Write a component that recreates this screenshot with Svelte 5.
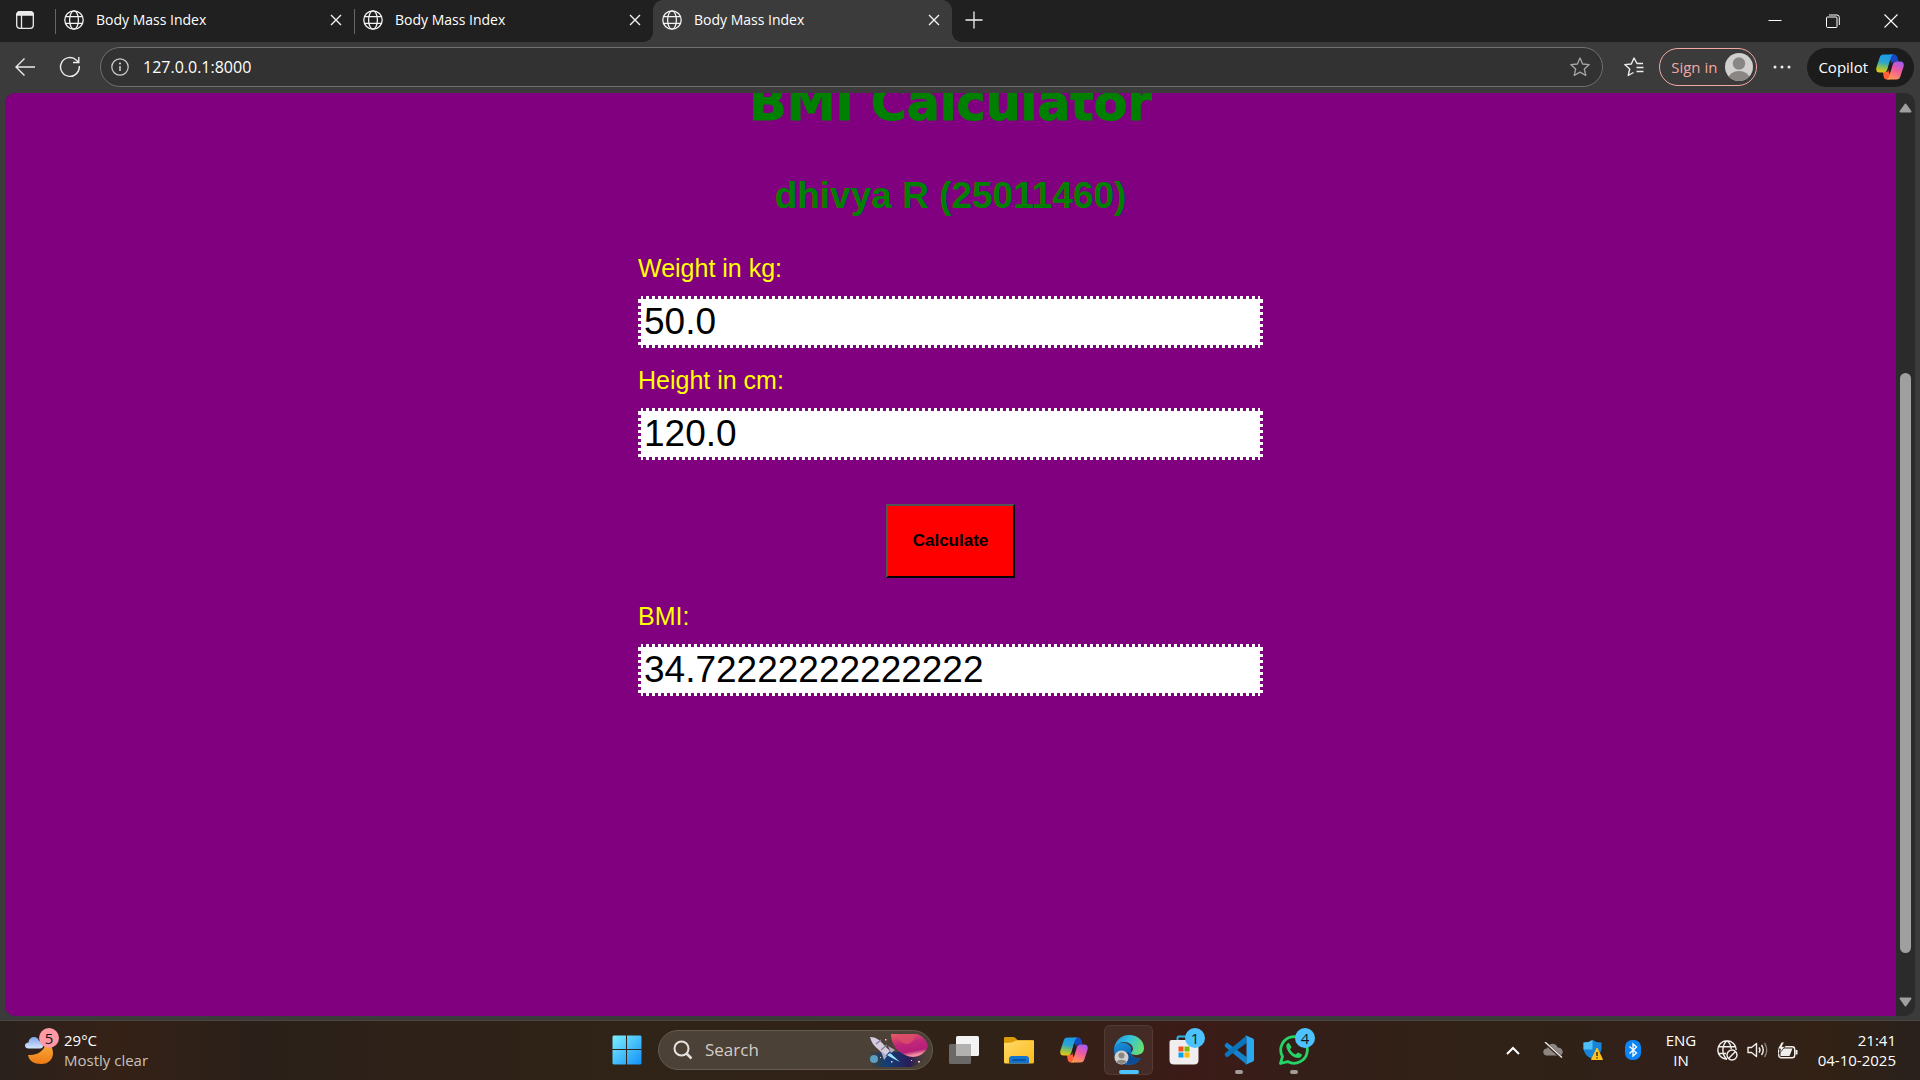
<script>
  const tabs = [
    { id: 1, title: 'Body Mass Index', active: false },
    { id: 2, title: 'Body Mass Index', active: false },
    { id: 3, title: 'Body Mass Index', active: true }
  ];

  let weight = $state('50.0');
  let height = $state('120.0');
  let bmi = $state('34.72222222222222');

  function calculate(event) {
    event.preventDefault();
    const metres = Number(height) / 100;
    bmi = String(Number(weight) / (metres * metres));
  }
</script>

{#snippet globe()}
  <svg width="20" height="20" viewBox="0 0 20 20" fill="none" stroke="#f2f2f2" stroke-width="1.3" aria-hidden="true">
    <circle cx="10" cy="10" r="9.2" />
    <ellipse cx="10" cy="10" rx="4.4" ry="9.2" />
    <path d="M1.6 6.6H18.4M1.6 13.4H18.4" />
  </svg>
{/snippet}

{#snippet copilot(uid)}
  <svg width="28" height="26" viewBox="0 0 28 26" aria-hidden="true">
    <defs>
      <linearGradient id="{uid}-a" x1="0.4" y1="0" x2="0.2" y2="1">
        <stop offset="0" stop-color="#1b9be8" />
        <stop offset="0.4" stop-color="#2aa5cf" />
        <stop offset="0.7" stop-color="#8cc152" />
        <stop offset="1" stop-color="#f5c60c" />
      </linearGradient>
      <linearGradient id="{uid}-b" x1="0.7" y1="0" x2="0.3" y2="1">
        <stop offset="0" stop-color="#a45af2" />
        <stop offset="0.45" stop-color="#ee5a9c" />
        <stop offset="1" stop-color="#ff9a52" />
      </linearGradient>
    </defs>
    <path d="M14 0.500H18C20 0.500 21 2 21.600 4L22.600 7.500H19C16.500 7.500 15.600 9 15 11L13.500 6Z" fill="#1748c8" />
    <path d="M7 18H10C12 18 12.500 16 13 14L15 20L14 25.500H11C8.500 25.500 8 24 7.500 22Z" fill="#ff6038" />
    <path d="M7.500 0.500H17.500C15.700 1 15 3 14.500 4.800L11.300 15.500C10.700 17.600 9.500 18.500 7.500 18.500H3.500C0.500 18.500 -0.300 16 0.500 13.200L3.600 3.800C4.300 1.600 5.500 0.500 7.500 0.500Z" fill="url(#{uid}-a)" />
    <path d="M20.500 25.500H10.500C12.300 25 13 23 13.500 21.200L16.700 10.500C17.300 8.400 18.500 7.500 20.500 7.500H24.500C27.500 7.500 28.300 10 27.500 12.800L24.400 22.200C23.700 24.400 22.500 25.500 20.500 25.500Z" fill="url(#{uid}-b)" />
    <path d="M14.600 5.500L12 14.500L13.400 20.500L16.200 11.500Z" fill="#241c1c" />
  </svg>
{/snippet}

<div class="window">
  <header class="tabstrip">
    <button class="workspaces" aria-label="Tab actions">
      <svg width="20" height="20" viewBox="0 0 20 20" fill="none" stroke="#ececec" stroke-width="1.300" aria-hidden="true">
        <rect x="1.700" y="1.700" width="16.600" height="16.600" rx="3" />
        <path d="M2 5V4.500Q2 2 4.500 2H15.500Q18 2 18 4.500V5Z" fill="#ececec" />
        <path d="M6.500 5V18" />
      </svg>
    </button>
    <nav class="tabs" aria-label="Open tabs">
      {#each tabs as tab (tab.id)}
        <div class="tab" class:active={tab.active}>
          <button class="tab-title">
            {@render globe()}
            <span>{tab.title}</span>
          </button>
          <button class="tab-close" aria-label="Close tab">
            <svg width="12" height="12" viewBox="0 0 12 12" stroke="#f2f2f2" stroke-width="1.400" aria-hidden="true">
              <path d="M1 1L11 11M11 1L1 11" />
            </svg>
          </button>
        </div>
      {/each}
    </nav>
    <button class="new-tab" aria-label="New tab">
      <svg width="18" height="18" viewBox="0 0 18 18" stroke="#f2f2f2" stroke-width="1.300" aria-hidden="true">
        <path d="M9 0.500V17.500M0.500 9H17.500" />
      </svg>
    </button>
    <div class="window-controls">
      <button aria-label="Minimise">
        <svg width="14" height="14" viewBox="0 0 14 14" stroke="#fff" aria-hidden="true"><path d="M0.500 6.500H13.500" /></svg>
      </button>
      <button aria-label="Restore">
        <svg width="14" height="14" viewBox="0 0 14 14" fill="none" stroke="#fff" aria-hidden="true">
          <rect x="0.500" y="3" width="10.500" height="10.500" rx="1" />
          <path d="M3 1H11Q13.300 1 13.300 3.300V11" />
        </svg>
      </button>
      <button aria-label="Close">
        <svg width="14" height="14" viewBox="0 0 14 14" stroke="#fff" stroke-width="1.100" aria-hidden="true"><path d="M0.500 0.500L13.500 13.500M13.500 0.500L0.500 13.500" /></svg>
      </button>
    </div>
  </header>

  <div class="toolbar">
    <button class="tool" aria-label="Back">
      <svg width="22" height="20" viewBox="0 0 22 20" fill="none" stroke="#ececec" stroke-width="1.400" aria-hidden="true"><path d="M10.500 1.500L2 10L10.500 18.500M2 10H21" /></svg>
    </button>
    <button class="tool" aria-label="Refresh">
      <svg width="22" height="22" viewBox="0 0 22 22" fill="none" stroke="#ececec" stroke-width="1.400" aria-hidden="true">
        <path d="M20.300 10A9.400 9.400 0 1 1 17.500 4.200L19.800 6.200M19.800 1V6.500H14" />
      </svg>
    </button>
    <div class="address">
      <svg width="18" height="18" viewBox="0 0 18 18" fill="none" stroke="#d0d0d0" stroke-width="1.200" aria-hidden="true">
        <circle cx="9" cy="9" r="8.200" />
        <path d="M9 8V13" stroke-width="1.500" />
        <circle cx="9" cy="5.500" r="0.500" fill="#d0d0d0" />
      </svg>
      <input type="text" aria-label="Address" value="127.0.0.1:8000" />
      <button aria-label="Add to favourites">
        <svg width="20" height="20" viewBox="0 0 20 20" fill="none" stroke="#a6a6a6" stroke-width="1.300" stroke-linejoin="round" aria-hidden="true">
          <path d="M10 1L12.600 7L19.200 7.600L14.300 12L15.800 18.500L10 15.100L4.200 18.500L5.700 12L0.800 7.600L7.400 7Z" />
        </svg>
      </button>
    </div>
    <button class="tool favourites" aria-label="Favourites">
      <svg width="20" height="20" viewBox="0 0 20 20" fill="none" stroke="#ececec" stroke-width="1.400" stroke-linejoin="round" aria-hidden="true">
        <path d="M19 6.500H13L10 1L7.300 7L0.800 7.600L5.700 12L4.200 18.500L9.500 15.500M12.500 10.500H19.500M12.500 14.500H19.500" />
      </svg>
    </button>
    <button class="sign-in">
      <span>Sign in</span>
      <svg width="28" height="28" viewBox="0 0 28 28" aria-hidden="true">
        <defs><clipPath id="avatar"><circle cx="14" cy="14" r="14" /></clipPath></defs>
        <g clip-path="url(#avatar)">
          <path d="M0 0H28V28H0Z" fill="#d2d0ce" />
          <circle cx="14" cy="10.500" r="6.200" fill="#8a8683" />
          <ellipse cx="14" cy="25.500" rx="10.500" ry="7.500" fill="#8a8683" />
        </g>
      </svg>
    </button>
    <button class="more" aria-label="Settings and more">
      <svg width="18" height="4" viewBox="0 0 18 4" fill="#ececec" aria-hidden="true"><circle cx="2" cy="2" r="1.500" /><circle cx="9" cy="2" r="1.500" /><circle cx="16" cy="2" r="1.500" /></svg>
    </button>
    <button class="copilot">
      <span>Copilot</span>
      {@render copilot('side')}
    </button>
  </div>

  <div class="viewport">
    <main class="page">
      <form class="bmi" onsubmit={calculate}>
        <h1>BMI Calculator</h1>
        <h2>dhivya R (25011460)</h2>
        <label for="weight">Weight in kg:</label>
        <input id="weight" type="text" bind:value={weight} />
        <label for="height">Height in cm:</label>
        <input id="height" type="text" bind:value={height} />
        <button type="submit">Calculate</button>
        <label for="bmi">BMI:</label>
        <input id="bmi" type="text" bind:value={bmi} />
      </form>
    </main>
    <div class="scrollbar" aria-hidden="true">
      <svg width="13" height="10" viewBox="0 0 13 10"><path d="M6.500 1.500L11.500 8.500H1.500Z" fill="#9f9f9f" stroke="#9f9f9f" stroke-width="2" stroke-linejoin="round" /></svg>
      <div class="track"><div class="thumb"></div></div>
      <svg width="13" height="10" viewBox="0 0 13 10"><path d="M6.500 8.500L11.500 1.500H1.500Z" fill="#9f9f9f" stroke="#9f9f9f" stroke-width="2" stroke-linejoin="round" /></svg>
    </div>
  </div>

  <footer class="taskbar">
    <button class="weather">
      <svg width="36" height="36" viewBox="0 0 36 36" aria-hidden="true">
        <defs>
          <linearGradient id="moon" x1="0" y1="0" x2="0" y2="1"><stop offset="0" stop-color="#f8b13c" /><stop offset="1" stop-color="#f07a16" /></linearGradient>
          <linearGradient id="cloud" x1="0" y1="0" x2="0" y2="1"><stop offset="0" stop-color="#7ea6ec" /><stop offset="1" stop-color="#d7e4fb" /></linearGradient>
        </defs>
        <path d="M22 10C21 18 14 24 4 23C5 29 10 32 17 32C25 32 29 27 29 21C29 16 26 11 22 10Z" fill="url(#moon)" />
        <path d="M4.500 16.500C-0.500 16.500 0 10.500 4.500 10.500C5 4 13.500 3 15 9C20 9 21 16.500 16 16.500Z" fill="url(#cloud)" />
      </svg>
      <span class="badge alert">5</span>
      <span class="weather-text"><span>29°C</span><span class="dim">Mostly clear</span></span>
    </button>

    <nav class="apps" aria-label="Taskbar">
      <button class="app" aria-label="Start">
        <svg width="30" height="30" viewBox="0 0 30 30" aria-hidden="true">
          <defs><linearGradient id="win" x1="0" y1="0" x2="1" y2="1"><stop offset="0" stop-color="#7df0ff" /><stop offset="1" stop-color="#1290f8" /></linearGradient></defs>
          <path d="M1.500 0.500H14V14H0.500V1.500ZM15 0.500H28.500L29.500 1.500V14H15ZM0.500 15H14V29.500H1.500L0.500 28.500ZM15 15H29.500V28.500L28.500 29.500H15Z" fill="url(#win)" />
        </svg>
      </button>
      <label class="search">
        <svg width="20" height="20" viewBox="0 0 20 20" fill="none" stroke="#e6e2df" stroke-width="2" aria-hidden="true"><circle cx="8.500" cy="8.500" r="7" /><path d="M13.500 13.500L18.500 18.500" stroke-width="2.500" /></svg>
        <input type="text" placeholder="Search" aria-label="Search" />
        <svg width="62" height="36" viewBox="0 0 62 36" aria-hidden="true">
          <defs>
            <linearGradient id="sky" x1="0" y1="0" x2="1" y2="0"><stop offset="0" stop-color="#153456" stop-opacity="0" /><stop offset="0.300" stop-color="#123f78" /><stop offset="0.700" stop-color="#281d58" /><stop offset="1" stop-color="#472c4b" stop-opacity="0" /></linearGradient>
            <linearGradient id="planet" x1="0" y1="0" x2="0.300" y2="1"><stop offset="0" stop-color="#e8615d" /><stop offset="0.500" stop-color="#c0267a" /><stop offset="0.850" stop-color="#b51f78" /><stop offset="1" stop-color="#f08a9c" /></linearGradient>
          </defs>
          <path d="M2 20H60C57 30 49 35 42 35H8C3 34 0 26 2 20Z" fill="url(#sky)" />
          <path d="M24 2H50C56 4 60 9 61 14C57 25 46 27 38 23C29 19 24 11 24 2Z" fill="url(#planet)" />
          <path d="M31 2H47C49 9 42 14 36 11C32 9 30 6 31 2Z" fill="#dc4e68" opacity="0.800" />
          <circle cx="7" cy="27" r="4" fill="#5a9ec0" />
          <path d="M3 5C9 5 13 8 17 13L23 19L18 24L12 18C7 14 4 10 3 5Z" fill="#d4cddd" />
          <path d="M9 12L14 8M14 18L20 13" stroke="#8b7fa8" stroke-width="1.500" />
          <path d="M21 14L28 18L24 21ZM14 19L17 28L20 24Z" fill="#b5a9c4" />
          <path d="M23 21L33 30L25 26L20 23Z" fill="#9fe3ff" />
          <path d="M18 7h1.500v1.500h-1.500zM24 29h1.500v1.500h-1.500zM44 28h1v1h-1zM51 29h2v1.500h-2zM13 25h1v1h-1z" fill="#f4dcc4" />
        </svg>
      </label>
      <button class="app" aria-label="Task view">
        <svg width="30" height="28" viewBox="0 0 30 28" aria-hidden="true"><rect x="0" y="8" width="22" height="20" rx="1.500" fill="#6b6968" /><rect x="7" y="0" width="23" height="20" rx="1.500" fill="#f3f3f3" /><path d="M7 8H22V20H8.500Q7 20 7 18.500Z" fill="#b2b1b0" /></svg>
      </button>
      <button class="app" aria-label="File Explorer">
        <svg width="30" height="28" viewBox="0 0 30 28" aria-hidden="true">
          <defs><linearGradient id="folder" x1="0" y1="0" x2="1" y2="1"><stop offset="0" stop-color="#ffd968" /><stop offset="1" stop-color="#fcba1c" /></linearGradient></defs>
          <path d="M0 2Q0 1 1 1H9Q11 1 12.500 3L13.500 4H29Q30 4 30 5V14H0Z" fill="#dd9b08" />
          <path d="M0 7Q9 7 12 4.500H29Q30 4.500 30 6V26Q30 27.500 28.500 27.500H1.500Q0 27.500 0 26Z" fill="url(#folder)" />
          <path d="M5 27.500V23Q5 20 8 20H22Q25 20 25 23V27.500Z" fill="#1374d0" /><path d="M9 24H21" stroke="#074a93" stroke-width="1.500" stroke-linecap="round" />
        </svg>
      </button>
      <button class="app" aria-label="Copilot">{@render copilot('task')}</button>
      <button class="app current" aria-label="Microsoft Edge">
        <svg width="32" height="32" viewBox="0 0 32 32" aria-hidden="true">
          <defs>
            <linearGradient id="edge-top" x1="0" y1="0.300" x2="1" y2="0.600"><stop offset="0" stop-color="#2196e0" /><stop offset="0.450" stop-color="#35c1dd" /><stop offset="1" stop-color="#6be06a" /></linearGradient>
            <linearGradient id="edge-low" x1="0" y1="0" x2="0.500" y2="1"><stop offset="0" stop-color="#1794dd" /><stop offset="1" stop-color="#0f57a8" /></linearGradient>
          </defs>
          <path d="M1 16C1 9 7 8 12 9C17 10 19 14 18 17C17 20 19 25 28 24C25 29 21 31 16 31C8 31 1 25 1 16Z" fill="url(#edge-low)" />
          <path d="M11 20C10 27 16 32 22 29C25 28 27 26 28 24C22 26 17 23 17 19C14 17 12 18 11 20Z" fill="#0c4c94" />
          <path d="M1 15C2 7 8 1 16 1C25 1 31 7 31 14C31 19 27 21 23 21C20 21 18 20 18 19C18 18 20 17 20 15C20 11 16 8 11 8C6 8 2 11 1 15Z" fill="url(#edge-top)" />
          <circle cx="8.500" cy="23.500" r="7" fill="#d2d0ce" /><circle cx="8.500" cy="21.500" r="3" fill="#8a8683" /><path d="M3.500 28C5 25 12 25 13.500 28Q8.500 32 3.500 28Z" fill="#8a8683" />
        </svg>
      </button>
      <button class="app" aria-label="Microsoft Store">
        <svg width="30" height="30" viewBox="0 0 30 30" aria-hidden="true"><path d="M8.500 8V3Q8.500 1.500 10 1.500H20Q21.500 1.500 21.500 3V8" fill="none" stroke="#28b5e8" stroke-width="2" /><path d="M0.500 7Q0.500 5 2.500 5H27.500Q29.500 5 29.500 7V25Q29.500 29.500 25 29.500H5Q0.500 29.500 0.500 25Z" fill="#f0eeee" /><path d="M9.500 11.500H14.500V16.500H9.500Z" fill="#f25022" /><path d="M15.500 11.500H20.500V16.500H15.500Z" fill="#7fba00" /><path d="M9.500 17.500H14.500V22.500H9.500Z" fill="#00a4ef" /><path d="M15.500 17.500H20.500V22.500H15.500Z" fill="#ffb900" /></svg>
        <span class="badge">1</span>
      </button>
      <button class="app running" aria-label="Visual Studio Code">
        <svg width="30" height="30" viewBox="0 0 30 30" aria-hidden="true"><path d="M0.800 9.500L3 7.500L22.500 22V29.500L0.800 11.500Z" fill="#1283cc" /><path d="M0.800 20.500L3 22.500L22.500 8V0.500L0.800 18.500Z" fill="#0b74bd" /><path d="M21.500 0.300L29 3.500Q30 4 30 5V25Q30 26 29 26.500L21.500 29.800Q22.500 29 22.500 27V3Q22.500 1 21.500 0.300Z" fill="#2aa8f2" /></svg>
      </button>
      <button class="app running" aria-label="WhatsApp">
        <svg width="32" height="32" viewBox="0 0 32 32" aria-hidden="true"><path d="M2.500 29.500L4.500 22.500A13.300 13.300 0 1 1 9.700 27.600Z" fill="none" stroke="#25d366" stroke-width="2.800" stroke-linejoin="round" /><path d="M11 9L13.500 13L12 15.500Q14 19 17.500 20.500L20 18.500L24 20.500Q23.500 24 20 24Q14 23.500 10.500 18Q7 12 9 10Q10 8.500 11 9Z" fill="#25d366" /></svg>
        <span class="badge">4</span>
      </button>
    </nav>

    <div class="tray">
      <button class="tray-icon" aria-label="Show hidden icons"><svg width="14" height="9" viewBox="0 0 14 9" fill="none" stroke="#fff" stroke-width="2" aria-hidden="true"><path d="M1 8L7 2L13 8" /></svg></button>
      <button class="tray-icon" aria-label="OneDrive"><svg width="20" height="16" viewBox="0 0 20 16" aria-hidden="true"><path d="M4 13.500C-1 13.500 -1 6.500 4 6.500C5 1 13 0 14.500 5.500C21 5.500 21.500 13.500 16 13.500Z" fill="#8d8681" /><path d="M1 0L18.500 15.500" stroke="#33261d" stroke-width="3" /><path d="M2 0L19 15.500" stroke="#eeeae7" stroke-width="1.400" /></svg></button>
      <button class="tray-icon" aria-label="Windows Security"><svg width="20" height="20" viewBox="0 0 20 20" aria-hidden="true"><path d="M9.500 0Q13 2.500 18.500 2.500V9Q17.500 16 9.500 19Q1.500 16 0.500 9V2.500Q6 2.500 9.500 0Z" fill="#1884d8" /><path d="M9.500 0V9.500H0.500V2.500Q6 2.500 9.500 0Z" fill="#4fc0f5" /><path d="M14 8L19.500 19.500H8.500Z" fill="#ffc21c" stroke="#ffc21c" stroke-linejoin="round" /><path d="M14 12V16M14 17.200V18.500" stroke="#2e2319" stroke-width="1.400" /></svg></button>
      <button class="tray-icon" aria-label="Bluetooth"><svg width="16" height="20" viewBox="0 0 16 20" aria-hidden="true"><rect width="16" height="20" rx="7" fill="#0a84f7" /><path d="M4.500 6.500L11.500 13L8 16V4L11.500 7L4.500 13.500" fill="none" stroke="#fff" stroke-width="1.300" /></svg></button>
      <button class="language"><span>ENG</span><span>IN</span></button>
      <button class="quick" aria-label="Network, volume and battery">
        <svg width="21" height="21" viewBox="0 0 21 21" fill="none" stroke="#f2f0ee" stroke-width="1.400" aria-hidden="true"><path d="M10 19.200A9.200 9.200 0 1 1 19.200 10M1.500 6.800H18.500M1.500 13.500H9M10 19.200C4.500 15 4.500 5 10 0.800C13 3 14 6 14.200 9" /><circle cx="15" cy="15" r="5" /><path d="M11.500 18.500L18.500 11.500" /></svg>
        <svg width="21" height="18" viewBox="0 0 21 18" fill="none" stroke="#f2f0ee" stroke-width="1.400" aria-hidden="true"><path d="M1 6.500V11.500H4.500L9.500 15.500V2.500L4.500 6.500Z" stroke-linejoin="round" /><path d="M12 6.500Q14 9 12 11.500M14.500 4Q18 9 14.500 14" /><path d="M17.500 2Q22 9 17.500 16" stroke="#857d77" /></svg>
        <svg width="21" height="17" viewBox="0 0 21 17" aria-hidden="true"><rect x="1.700" y="4.700" width="16" height="11" rx="2.500" fill="none" stroke="#f2f0ee" stroke-width="1.400" /><path d="M3.500 14V6.500H15.500L12.500 14ZM18.500 8H20.500V12.500H18.500Z" fill="#f2f0ee" /><path d="M4.500 0L0.500 7H3.500L2 12L8 4.500H5L7.500 0Z" fill="#f2f0ee" stroke="#302017" stroke-width="0.800" /></svg>
      </button>
      <button class="clock"><span>21:41</span><span>04-10-2025</span></button>
    </div>
  </footer>
</div>

<style>
  :global(body) {
    margin: 0;
    background: #3b3b3b;
  }
  .window {
    display: flex;
    flex-direction: column;
    height: 100vh;
    overflow: hidden;
    background: #3b3b3b;
    color: #fff;
    font-family: 'Open Sans', 'Noto Sans', sans-serif;
    font-size: 14px;
    line-height: 20px;
  }
  button,
  input {
    font: inherit;
    color: inherit;
  }
  button {
    display: flex;
    align-items: center;
    justify-content: center;
    padding: 0;
    border: 0;
    background: none;
  }
  svg {
    display: block;
    flex: none;
  }

  /* Tab strip */
  .tabstrip {
    display: flex;
    flex: none;
    height: 42px;
    background: #202020;
  }
  .workspaces {
    width: 50px;
    margin-right: 5px;
    padding-bottom: 2px;
  }
  .tabs {
    display: flex;
    min-width: 0;
  }
  .tab {
    display: flex;
    position: relative;
    width: 299px;
    min-width: 0;
    box-sizing: border-box;
    padding: 0 12px 2px 9px;
  }
  .tab:not(.active)::before {
    content: '';
    position: absolute;
    left: 0;
    top: 9px;
    bottom: 8px;
    width: 1px;
    background: #666;
  }
  .tab.active {
    background: #3b3b3b;
    border-radius: 10px 10px 0 0;
  }
  .tab.active::before,
  .tab.active::after {
    content: '';
    position: absolute;
    bottom: 0;
    width: 10px;
    height: 10px;
  }
  .tab.active::before {
    right: 100%;
    background: radial-gradient(circle at 0 0, #202020 10px, #3b3b3b 10px);
  }
  .tab.active::after {
    left: 100%;
    background: radial-gradient(circle at 100% 0, #202020 10px, #3b3b3b 10px);
  }
  .tab-title {
    flex: 1;
    justify-content: flex-start;
    gap: 12px;
    min-width: 0;
  }
  .new-tab {
    width: 44px;
    padding-bottom: 3px;
  }
  .window-controls {
    display: flex;
    margin-left: auto;
  }
  .window-controls button {
    width: 58px;
  }

  /* Toolbar */
  .toolbar {
    display: flex;
    flex: none;
    align-items: center;
    height: 51px;
    box-sizing: border-box;
    padding: 0 6px 1px 2px;
  }
  .tool {
    width: 45px;
    height: 40px;
  }
  .address {
    display: flex;
    flex: 1;
    align-items: center;
    height: 40px;
    box-sizing: border-box;
    margin: 0 8px;
    padding: 0 12px 0 10px;
    border: 1px solid #707070;
    border-radius: 20px;
    background: #323232;
  }
  .address input {
    flex: 1;
    min-width: 0;
    margin-left: 14px;
    padding: 0;
    border: 0;
    background: none;
    font-size: 16px;
    outline: 0;
  }
  .favourites {
    margin-right: 3px;
  }
  .sign-in {
    gap: 8px;
    height: 38px;
    padding: 0 3px 0 11px;
    border: 1px solid #f2a9a6;
    border-radius: 19px;
    color: #f2a9a6;
    font-size: 15px;
  }
  .more {
    width: 50px;
    height: 38px;
  }
  .copilot {
    gap: 8px;
    height: 39px;
    padding: 0 10px 0 11px;
    border-radius: 20px;
    background: #1c1c1c;
    font-size: 15px;
  }

  /* Page */
  .viewport {
    display: flex;
    flex: 1;
    min-height: 0;
    margin: 0 5px;
    border-radius: 10px;
    overflow: hidden;
    background: #2b2b2b;
  }
  .page {
    flex: 1;
    overflow: hidden;
    background: purple;
    font-family: 'Liberation Sans', Arial, sans-serif;
  }
  .bmi {
    display: flex;
    flex-direction: column;
    width: 625px;
    max-width: 100%;
    margin: -24px auto 0;
  }
  .bmi h1,
  .bmi h2 {
    margin: 0;
    color: green;
    text-align: center;
  }
  .bmi h1 {
    font-family: 'Arial Black', 'DejaVu Sans', sans-serif;
    font-size: 49px;
    font-weight: 900;
    line-height: 70px;
    -webkit-text-stroke: 1px green;
  }
  .bmi h2 {
    margin: 35px 0;
    font-size: 37px;
    line-height: 44px;
  }
  .bmi label {
    margin-bottom: 13px;
    color: yellow;
    font-size: 25px;
    line-height: 30px;
  }
  .bmi input {
    height: 52px;
    box-sizing: border-box;
    margin-bottom: 17px;
    padding: 1px 3px;
    border: 3px dotted purple;
    background: #fff;
    color: #000;
    font-size: 37px;
    line-height: 44px;
    outline: 0;
  }
  .bmi button {
    align-self: center;
    margin: 27px 0 23px;
    padding: 25px;
    border: 2px outset #000;
    background: red;
    color: #000;
    font-size: 17px;
    font-weight: 700;
  }
  .scrollbar {
    display: flex;
    flex-direction: column;
    align-items: center;
    width: 19px;
    padding: 10px 0 9px;
    box-sizing: border-box;
  }
  .track {
    display: flex;
    flex: 1;
    flex-direction: column;
    justify-content: flex-end;
    padding-bottom: 44px;
  }
  .thumb {
    width: 11px;
    height: 69%;
    border-radius: 6px;
    background: #9f9f9f;
  }

  /* Taskbar */
  .taskbar {
    display: grid;
    grid-template-columns: 1fr auto 1fr;
    flex: none;
    height: 60px;
    margin-top: 4px;
    padding-bottom: 1px;
    border-top: 1px solid #4b453f;
    box-sizing: border-box;
    background: linear-gradient(90deg, #2a211d 0, #352116 6%, #2b2019 13%, #302317 33%, #312217 53%, #3c1b17 62%, #331f18 69%, #302216 78%, #31201a 88%, #322114 95%, #29211e 100%);
    font-size: 15px;
  }
  .weather {
    position: relative;
    justify-self: start;
    gap: 4px;
    padding-left: 24px;
    text-align: left;
  }
  .weather-text,
  .language,
  .clock {
    display: flex;
    flex-direction: column;
  }
  .dim {
    color: #c8c2bd;
  }
  .badge {
    position: absolute;
    top: 7px;
    right: 6px;
    width: 20px;
    height: 20px;
    border-radius: 50%;
    background: #4cc2ff;
    color: #101820;
    text-align: center;
  }
  .badge.alert {
    left: 39px;
    right: auto;
    background: #ff99a4;
  }
  .apps {
    display: flex;
    align-items: center;
  }
  .app {
    position: relative;
    width: 55px;
    height: 58px;
  }
  .app.current::before {
    content: '';
    position: absolute;
    inset: 4px 3px;
    border: 1px solid #ffffff14;
    border-radius: 6px;
    background: #ffffff10;
  }
  .app.current svg {
    position: relative;
  }
  .app.current::after,
  .app.running::after {
    content: '';
    position: absolute;
    bottom: 5px;
    width: 8px;
    height: 4px;
    border-radius: 2px;
    background: #a39c98;
  }
  .app.current::after {
    width: 20px;
    background: #4cc2ff;
  }
  .search {
    display: flex;
    align-items: center;
    width: 275px;
    height: 40px;
    box-sizing: border-box;
    margin: 0 3px 0 4px;
    padding: 0 3px 0 14px;
    border: 1px solid #665b50;
    border-radius: 20px;
    background: #4c4136;
  }
  .search input {
    flex: 1;
    min-width: 0;
    margin-left: 12px;
    padding: 0;
    border: 0;
    background: none;
    font-size: 17px;
    outline: 0;
  }
  .search input::placeholder {
    color: #d3cdc6;
    opacity: 1;
  }
  .tray {
    display: flex;
    justify-content: flex-end;
    padding-right: 24px;
  }
  .tray-icon {
    width: 40px;
  }
  .language {
    width: 56px;
  }
  .quick {
    gap: 9px;
    margin: 0 8px;
  }
  .clock {
    align-items: flex-end;
    width: 90px;
  }
</style>
